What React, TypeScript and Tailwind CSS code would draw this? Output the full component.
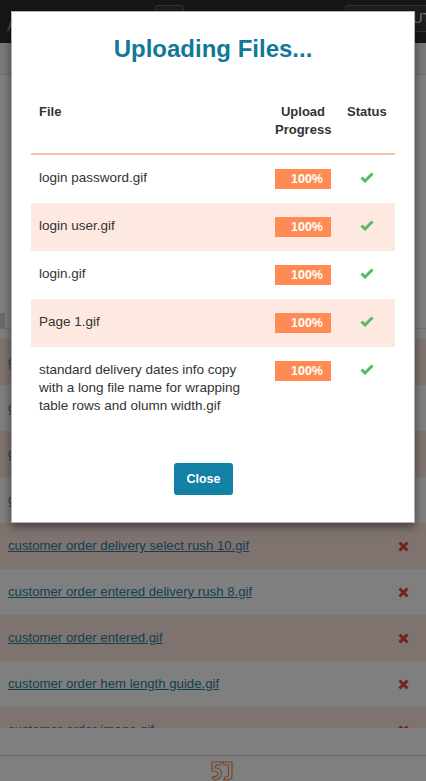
import React from "react";

const uploads = [
  { name: "login password.gif", tint: false },
  { name: "login user.gif", tint: true },
  { name: "login.gif", tint: false },
  { name: "Page 1.gif", tint: true },
  {
    name: "standard delivery dates info copy with a long file name for wrapping table rows and olumn width.gif",
    tint: false,
  },
];

const files = [
  "gown fit guide.gif",
  "gown order summary.gif",
  "guest checkout.gif",
  "guide to sizing.gif",
  "customer order delivery select rush 10.gif",
  "customer order entered delivery rush 8.gif",
  "customer order entered.gif",
  "customer order hem length guide.gif",
  "customer order image.gif",
];

const Check = () => (
  <svg width="14" height="11" viewBox="0 0 14 11">
    <path d="M1.5 5.5 L5 9 L12.5 1.5" fill="none" stroke="#5cb85c" strokeWidth="3" />
  </svg>
);

const Cross = () => (
  <svg width="11" height="11" viewBox="0 0 11 11">
    <path d="M1.5 1.5 L9.5 9.5 M9.5 1.5 L1.5 9.5" stroke="#e04a44" strokeWidth="3" />
  </svg>
);

const Logo = () => (
  <svg width="22" height="20" viewBox="0 0 22 20" fill="none" stroke="#f58a55" strokeWidth="1.2">
    <path d="M1 1 H11 L9.5 4 H5 L4.2 7 C8 7 10.5 9 10.5 12 C10.5 16 7.5 19 3 19 L1.2 16 C5 16 7 15 7 12 C7 10.5 5 10 1 10 Z" />
    <path d="M12 1 H21 V15 C21 18 19 19 16 19 H13 L14 16 H16 C17 16 17.5 15 17.5 14 V4 H13 Z" />
  </svg>
);

export default function App() {
  return (
    <div className="relative h-[781px] w-[426px] overflow-hidden bg-white font-['Liberation_Sans',Arial,sans-serif] text-[#333]">
      {/* page behind the dialog */}
      <div className="flex h-[43px] items-start overflow-hidden bg-[#2e2e2e] pt-[5px]">
        <div className="w-[155px] shrink-0 pl-[7px] pt-[12px] text-[16px] leading-[18px] text-[#aaa]">Attachments</div>
        <div className="h-[30px] w-[29px] shrink-0 rounded-[3px] border border-[#666] bg-[#3c3c3c]" />
        <div className="w-[161px] shrink-0" />
        <div className="h-[27px] w-[110px] shrink-0 rounded-[3px] border border-[#666] bg-[#3c3c3c] pl-[26px] text-[14px] leading-[25px] text-[#eee]">
          LOGOUT
        </div>
      </div>
      <div className="h-[32px] border-b border-[#e2e2e2] bg-[#f4f4f4]" />
      <div className="h-[238px]" />
      <div className="h-[16px] border-b border-[#e0e0e0]">
        <div className="h-[15px] w-[5px] bg-[#d6d6d6]" />
      </div>
      <div className="h-[10px]" />
      <div className="h-[389px] overflow-hidden">
        {files.map((f, i) => (
          <div
            key={f}
            className={`flex h-[46px] items-center justify-between pl-2 pr-[17px] ${i % 2 === 0 ? "bg-[#fce6dc]" : "bg-white"}`}
          >
            <a className="text-[13.2px] text-[#2a7eaa] underline">{f}</a>
            <Cross />
          </div>
        ))}
      </div>
      <div className="h-[28px] border-b border-[#d4d4d4]" />
      <div className="flex justify-center pl-[18px] pt-[5px]">
        <Logo />
      </div>

      {/* dialog */}
      <div className="absolute inset-0 bg-black/50 px-[11px] pt-[11px]">
        <div className="w-[404px] border border-black/30 bg-white px-[19px] pb-[27px] pt-[19px] shadow-[0_3px_9px_rgba(0,0,0,0.5)]">
          <h1 className="text-center text-[24px] font-bold leading-[36px] text-[#11789a]">Uploading Files...</h1>
          <div className="mt-[28px]">
            <div className="grid grid-cols-[236px_72px_56px] border-b-2 border-[#f7c6aa] text-[13px] font-bold leading-[18px] text-[#333]">
              <div className="px-2 pb-[14px] pt-2">File</div>
              <div className="px-2 pb-[14px] pt-2 text-center">Upload Progress</div>
              <div className="px-2 pb-[14px] pt-2">Status</div>
            </div>
            {uploads.map((u) => (
              <div
                key={u.name}
                className={`grid grid-cols-[236px_72px_56px] py-[14px] text-[13.5px] leading-[18px] ${u.tint ? "bg-[#fde9e0]" : "bg-white"}`}
              >
                <div className="pl-2 pr-[18px]">{u.name}</div>
                <div className="px-2">
                  <div className="h-[20px] bg-[#fe8b53] pr-[8px] text-right text-[12.5px] font-bold leading-[20px] text-white">100%</div>
                </div>
                <div className="flex h-[20px] items-center justify-center px-2 pb-[4px]">
                  <Check />
                </div>
              </div>
            ))}
          </div>
          <div className="mt-[34px] pl-[143px]">
            <button className="h-[32px] w-[59px] rounded-[3px] bg-[#1380a5] text-[12.5px] font-bold text-white">Close</button>
          </div>
        </div>
      </div>
    </div>
  );
}
